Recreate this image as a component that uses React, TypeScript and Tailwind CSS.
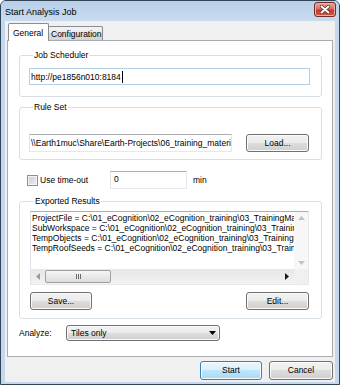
import React from "react";

const btnBase =
  "shrink-0 flex items-center justify-center h-[18px] rounded-[3px] border text-black shadow-[inset_0_0_0_1px_#fbfbfb]";
const btnGrad =
  "border-[#707070] bg-[linear-gradient(to_bottom,#f2f2f2_0%,#ebebeb_50%,#dddddd_50%,#cfcfcf_100%)]";
const btnDef =
  "border-[#3c7fb1] bg-[linear-gradient(to_bottom,#eaf6fd_0%,#d9f0fc_50%,#bee6fd_50%,#a7d9f5_100%)] shadow-[inset_0_0_0_1px_#d7eefc]";

function Btn({ className, children, def }: { className: string; children: React.ReactNode; def?: boolean }) {
  return (
    <div className={`${btnBase} ${def ? btnDef : btnGrad} ${className}`}>
      <span className="pb-[1px]">{children}</span>
    </div>
  );
}

const inputCls =
  "shrink-0 min-w-0 h-[17px] bg-white border border-[#e3e9ef] border-t-[#abadb3] border-l-[#e2e3ea] flex items-center pl-[1px] overflow-hidden whitespace-nowrap";

export default function App() {
  return (
    <div className="w-[340px] h-[385px] box-border border border-[#2f4556] rounded-t-[6px] bg-[#c4d7ec] flex flex-col font-['Liberation_Sans',Arial,sans-serif] text-[8.5px] leading-[10px] text-black overflow-hidden">
      {/* Title bar */}
      <div className="h-[20px] shrink-0 flex justify-between items-start pl-[4px] pr-[3px] bg-[linear-gradient(to_bottom,#b9d0e9,#c8dbef)]">
        <div className="text-[9px] leading-[12px] pt-[5px] text-black">Start Analysis Job</div>
        <div className="mt-[1px] w-[22px] h-[15px] rounded-[3px] border border-[#6e2d27] bg-[linear-gradient(to_bottom,#e6a79b_0%,#d5705f_45%,#c0392b_55%,#cf5a48_100%)] flex items-center justify-center shadow-[inset_0_0_0_1px_#eab0a6]">
          <svg width="10" height="9" viewBox="0 0 10 9">
            <path d="M1.5 1.5 L8.5 7.5 M8.5 1.5 L1.5 7.5" stroke="#5a2a24" strokeWidth="3.4" strokeLinecap="round" />
            <path d="M1.5 1.5 L8.5 7.5 M8.5 1.5 L1.5 7.5" stroke="#ffffff" strokeWidth="2" strokeLinecap="round" />
          </svg>
        </div>
      </div>

      {/* Client area */}
      <div className="flex-1 min-w-0 mx-[4px] mb-[2px] bg-[#f0f0f0] flex flex-col pl-[2px] pr-[1px] pt-[2px]">
        {/* Tabs */}
        <div className="h-[17px] flex items-end pl-[1px]">
          <div className="relative z-10 w-[41px] h-[18px] -mb-[1px] bg-white border border-b-0 border-[#898c95] rounded-t-[2px] flex items-start pt-[4px] pl-[4px]">
            General
          </div>
          <div className="w-[55px] h-[14px] -ml-[1px] border border-b-0 border-[#898c95] rounded-t-[2px] bg-[linear-gradient(to_bottom,#f3f3f3_0%,#ebebeb_50%,#dddddd_50%,#d4d4d4_100%)] flex items-start pt-[2px] pl-[2px]">
            Configuration
          </div>
        </div>

        {/* Panel */}
        <div className="w-[326px] h-[317px] box-border bg-white border border-[#a7abb2] flex flex-col pl-[11px] pr-[10px]">
          {/* Job Scheduler */}
          <fieldset className="min-w-0 mt-[9px] border border-[#d5dfe5] rounded-[3px] pl-[9px] pr-[11px] pb-[11px]">
            <legend className="ml-[4px] px-[1px] leading-[10px]">Job Scheduler</legend>
            <div className="pt-[8px]">
              <div className="h-[17px] bg-white border border-[#b5cfe7] flex items-center pl-[1px] whitespace-nowrap">
                <span>http://pe1856n010:8184</span>
                <span className="w-[1px] h-[12px] bg-black ml-[1px]" />
              </div>
            </div>
          </fieldset>

          {/* Rule Set */}
          <fieldset className="min-w-0 mt-[5px] border border-[#d5dfe5] rounded-[3px] pl-[9px] pr-[12px] pb-[7px]">
            <legend className="ml-[4px] px-[1px] leading-[10px]">Rule Set</legend>
            <div className="pt-[22px] flex items-center justify-between">
              <div className={`${inputCls} w-[203px] h-[18px]`}>
                <span>\\Earth1muc\Share\Earth-Projects\06_training_material</span>
              </div>
              <Btn className="w-[63px]">Load...</Btn>
            </div>
          </fieldset>

          {/* Time-out row */}
          <div className="mt-[11px] h-[18px] flex items-center">
            <div className="w-[91px] flex items-center pl-[8px]">
              <div className="w-[11px] h-[11px] border border-[#8e8f8f] bg-[linear-gradient(135deg,#c9cdd3,#eef0f2)] shadow-[inset_0_0_0_1px_#f4f4f4]" />
              <span className="ml-[2px]">Use time-out</span>
            </div>
            <div className={`${inputCls} w-[77px] h-[18px] items-start pt-[2px] pl-[3px]`}>0</div>
            <span className="ml-[6px]">min</span>
          </div>

          {/* Exported Results */}
          <fieldset className="min-w-0 mt-[7px] border border-[#d5dfe5] rounded-[3px] pl-[10px] pr-[12px] pb-[8px]">
            <legend className="ml-[4px] px-[1px] leading-[10px]">Exported Results</legend>
            <div className="pt-[5px]">
              <div className="h-[74px] border border-[#e3e9ef] border-t-[#abadb3] border-l-[#e2e3ea] bg-white flex flex-col">
                <div className="flex-1 flex min-h-0 min-w-0">
                  <div className="flex-1 min-w-0 overflow-hidden whitespace-nowrap pl-[1px] pt-[1px]">
                    <div>ProjectFile = C:\01_eCognition\02_eCognition_training\03_TrainingMaterial</div>
                    <div>SubWorkspace = C:\01_eCognition\02_eCognition_training\03_TrainingMaterial</div>
                    <div>TempObjects = C:\01_eCognition\02_eCognition_training\03_TrainingMaterial</div>
                    <div>TempRoofSeeds = C:\01_eCognition\02_eCognition_training\03_TrainingMaterial</div>
                  </div>
                  <div className="w-[14px] shrink-0 bg-[#f7f7f7] flex flex-col items-center justify-between py-[4px]">
                    <svg width="7" height="4" viewBox="0 0 7 4"><path d="M0 4 L3.5 0 L7 4 Z" fill="#c2c2c2" /></svg>
                    <svg width="7" height="4" viewBox="0 0 7 4"><path d="M0 0 L3.5 4 L7 0 Z" fill="#c2c2c2" /></svg>
                  </div>
                </div>
                <div className="h-[15px] shrink-0 flex">
                  <div className="flex-1 bg-[linear-gradient(to_bottom,#e6e6e6,#f2f2f2)] flex items-center">
                    <div className="w-[14px] flex justify-center">
                      <svg width="4" height="7" viewBox="0 0 4 7"><path d="M4 0 L0 3.5 L4 7 Z" fill="#9a9a9a" /></svg>
                    </div>
                    <div className="w-[66px] h-[13px] rounded-[2px] border border-[#a0a0a0] bg-[linear-gradient(to_bottom,#f6f6f6,#dcdcdc)] flex items-center justify-center gap-[1px]">
                      <span className="w-[1px] h-[5px] bg-[#6a6a6a]" />
                      <span className="w-[1px] h-[5px] bg-[#6a6a6a]" />
                      <span className="w-[1px] h-[5px] bg-[#6a6a6a]" />
                    </div>
                    <div className="flex-1" />
                    <div className="w-[14px] flex justify-center">
                      <svg width="4" height="7" viewBox="0 0 4 7"><path d="M0 0 L4 3.5 L0 7 Z" fill="#1a1a1a" /></svg>
                    </div>
                  </div>
                  <div className="w-[14px] bg-[#f0f0f0]" />
                </div>
              </div>
            </div>
            <div className="mt-[7px] flex justify-between">
              <Btn className="w-[62px]">Save...</Btn>
              <Btn className="w-[63px]">Edit...</Btn>
            </div>
          </fieldset>

          {/* Analyze row */}
          <div className="mt-[6px] h-[16px] flex items-center">
            <span className="w-[47px]">Analyze:</span>
            <div className={`w-[154px] h-[16px] rounded-[3px] border ${btnGrad} shadow-[inset_0_0_0_1px_#fbfbfb] flex items-center justify-between pl-[4px] pr-[3px]`}>
              <span>Tiles only</span>
              <svg width="7" height="4" viewBox="0 0 7 4"><path d="M0 0 L7 0 L3.5 4 Z" fill="#000" /></svg>
            </div>
          </div>
        </div>

        {/* Bottom buttons */}
        <div className="w-[326px] mt-[4px] flex justify-end gap-[7px]">
          <Btn className="w-[62px] h-[19px]" def>Start</Btn>
          <Btn className="w-[64px] h-[19px]">Cancel</Btn>
        </div>
      </div>
    </div>
  );
}
